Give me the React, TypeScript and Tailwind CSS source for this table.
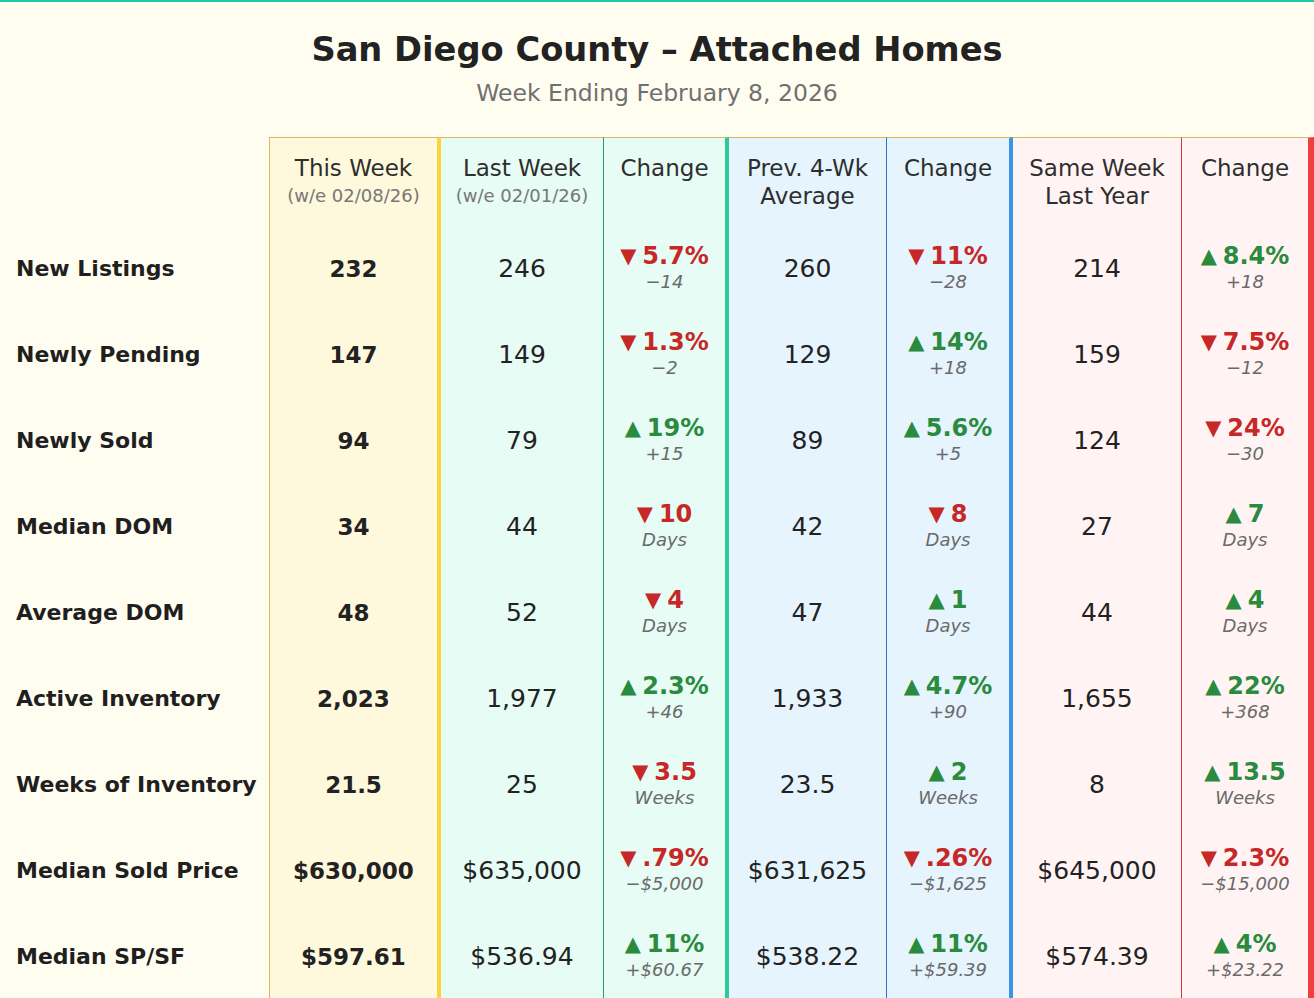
import React from "react";

type Change = { dir: "up" | "down"; main: string; sub: string };
type Row = {
  label: string;
  thisWeek: string;
  lastWeek: string;
  c1: Change;
  prev4: string;
  c2: Change;
  lastYear: string;
  c3: Change;
};

const up = (main: string, sub: string): Change => ({ dir: "up", main, sub });
const down = (main: string, sub: string): Change => ({ dir: "down", main, sub });

const rows: Row[] = [
  { label: "New Listings", thisWeek: "232", lastWeek: "246", c1: down("5.7%", "−14"), prev4: "260", c2: down("11%", "−28"), lastYear: "214", c3: up("8.4%", "+18") },
  { label: "Newly Pending", thisWeek: "147", lastWeek: "149", c1: down("1.3%", "−2"), prev4: "129", c2: up("14%", "+18"), lastYear: "159", c3: down("7.5%", "−12") },
  { label: "Newly Sold", thisWeek: "94", lastWeek: "79", c1: up("19%", "+15"), prev4: "89", c2: up("5.6%", "+5"), lastYear: "124", c3: down("24%", "−30") },
  { label: "Median DOM", thisWeek: "34", lastWeek: "44", c1: down("10", "Days"), prev4: "42", c2: down("8", "Days"), lastYear: "27", c3: up("7", "Days") },
  { label: "Average DOM", thisWeek: "48", lastWeek: "52", c1: down("4", "Days"), prev4: "47", c2: up("1", "Days"), lastYear: "44", c3: up("4", "Days") },
  { label: "Active Inventory", thisWeek: "2,023", lastWeek: "1,977", c1: up("2.3%", "+46"), prev4: "1,933", c2: up("4.7%", "+90"), lastYear: "1,655", c3: up("22%", "+368") },
  { label: "Weeks of Inventory", thisWeek: "21.5", lastWeek: "25", c1: down("3.5", "Weeks"), prev4: "23.5", c2: up("2", "Weeks"), lastYear: "8", c3: up("13.5", "Weeks") },
  { label: "Median Sold Price", thisWeek: "$630,000", lastWeek: "$635,000", c1: down(".79%", "−$5,000"), prev4: "$631,625", c2: down(".26%", "−$1,625"), lastYear: "$645,000", c3: down("2.3%", "−$15,000") },
  { label: "Median SP/SF", thisWeek: "$597.61", lastWeek: "$536.94", c1: up("11%", "+$60.67"), prev4: "$538.22", c2: up("11%", "+$59.39"), lastYear: "$574.39", c3: up("4%", "+$23.22") },
];

function ChangeCell({ c }: { c: Change }) {
  const color = c.dir === "up" ? "text-[#2a8a3e]" : "text-[#c62828]";
  return (
    <div className="flex flex-col items-center">
      <div className={`flex items-center gap-[6px] text-[24px] font-bold leading-[25px] ${color}`}>
        <span className="text-[21px]">{c.dir === "up" ? "▲" : "▼"}</span>
        <span>{c.main}</span>
      </div>
      <div className="whitespace-nowrap text-[18px] italic leading-[25px] text-[#6a6a6a]">{c.sub}</div>
    </div>
  );
}

function Header({ top, sub, two }: { top: string; sub?: string; two?: string }) {
  return (
    <div className="flex h-[88px] flex-col items-center pt-[16px] text-center">
      <div className="whitespace-nowrap text-[23px] leading-[28px] text-[#2e2e2e]">{top}</div>
      {two && <div className="whitespace-nowrap text-[23px] leading-[28px] text-[#2e2e2e]">{two}</div>}
      {sub && <div className="whitespace-nowrap text-[18px] leading-[28px] text-[#777]">{sub}</div>}
    </div>
  );
}

function Cell({ children }: { children: React.ReactNode }) {
  return <div className="flex h-[86px] items-center justify-center whitespace-nowrap">{children}</div>;
}

export default function App() {
  return (
    <div
      className="h-[998px] overflow-hidden border-t-2 border-[#1ccaa8] bg-[#fffdf0] text-[#222]"
      style={{ fontFamily: '"DejaVu Sans", "Open Sans", sans-serif' }}
    >
      <div className="pt-[26px] text-center">
        <h1 className="text-[33.7px] font-bold leading-[44px] text-[#222]">San Diego County – Attached Homes</h1>
        <p className="mt-[6px] text-[23.5px] leading-[30px] text-[#707070]">Week Ending February 8, 2026</p>
      </div>

      <div className="mt-[29px] flex">
        {/* row labels */}
        <div className="w-[269px] shrink-0">
          <div className="h-[88px]" />
          {rows.map((r) => (
            <div key={r.label} className="flex h-[86px] items-center whitespace-nowrap pl-[16px] text-[22px] font-bold text-[#1f1f1f]">
              {r.label}
            </div>
          ))}
        </div>

        <div className="w-[172px] shrink-0 border-t border-l border-r-4 border-t-[#dfb560] border-l-[#dfb560] border-r-[#fdd23b] bg-[#fef8dc]">
          <Header top="This Week" sub="(w/e 02/08/26)" />
          {rows.map((r) => (
            <Cell key={r.label}>
              <span className="text-[23px] font-bold">{r.thisWeek}</span>
            </Cell>
          ))}
        </div>

        <div className="w-[163px] shrink-0 border-t border-r border-t-[#dfb560] border-r-[#1f9a80] bg-[#e6fcf4]">
          <Header top="Last Week" sub="(w/e 02/01/26)" />
          {rows.map((r) => (
            <Cell key={r.label}>
              <span className="text-[25px]">{r.lastWeek}</span>
            </Cell>
          ))}
        </div>

        <div className="w-[125px] shrink-0 border-t border-r-4 border-t-[#dfb560] border-r-[#2ec99b] bg-[#e6fcf4]">
          <Header top="Change" />
          {rows.map((r) => (
            <Cell key={r.label}>
              <ChangeCell c={r.c1} />
            </Cell>
          ))}
        </div>

        <div className="w-[158px] shrink-0 border-t border-r border-t-[#dfb560] border-r-[#2b76c4] bg-[#e6f4fd]">
          <Header top="Prev. 4-Wk" two="Average" />
          {rows.map((r) => (
            <Cell key={r.label}>
              <span className="text-[25px]">{r.prev4}</span>
            </Cell>
          ))}
        </div>

        <div className="w-[126px] shrink-0 border-t border-r-4 border-t-[#dfb560] border-r-[#3b94e6] bg-[#e6f4fd]">
          <Header top="Change" />
          {rows.map((r) => (
            <Cell key={r.label}>
              <ChangeCell c={r.c2} />
            </Cell>
          ))}
        </div>

        <div className="w-[169px] shrink-0 border-t border-r border-t-[#dfb560] border-r-[#d8343c] bg-[#fff4f3]">
          <Header top="Same Week" two="Last Year" />
          {rows.map((r) => (
            <Cell key={r.label}>
              <span className="text-[25px]">{r.lastYear}</span>
            </Cell>
          ))}
        </div>

        <div className="w-[132px] shrink-0 border-t border-r-[6px] border-t-[#dfb560] border-r-[#ef4040] bg-[#fff4f3]">
          <Header top="Change" />
          {rows.map((r) => (
            <Cell key={r.label}>
              <ChangeCell c={r.c3} />
            </Cell>
          ))}
        </div>
      </div>
    </div>
  );
}
